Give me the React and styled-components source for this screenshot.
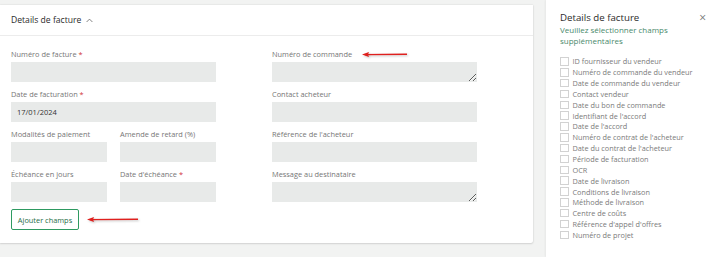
import React from 'react'
import styled, { createGlobalStyle } from 'styled-components'

const GlobalStyle = createGlobalStyle`
  html, body {
    margin: 0;
    padding: 0;
    background: #f2f3f2;
    font-family: "Open Sans", "Noto Sans", sans-serif;
  }
`

const leftFields = [
  [{ label: 'Numéro de facture', required: true }],
  [{ label: 'Date de facturation', required: true, value: '17/01/2024' }],
  [{ label: 'Modalités de paiement' }, { label: 'Amende de retard (%)' }],
  [{ label: 'Échéance en jours' }, { label: "Date d'échéance", required: true }],
]

const rightFields = [
  { label: 'Numéro de commande', area: true },
  { label: 'Contact acheteur' },
  { label: "Référence de l'acheteur" },
  { label: 'Message au destinataire', area: true },
]

const options = [
  'ID fournisseur du vendeur',
  'Numéro de commande du vendeur',
  'Date de commande du vendeur',
  'Contact vendeur',
  'Date du bon de commande',
  "Identifiant de l'accord",
  "Date de l'accord",
  "Numéro de contrat de l'acheteur",
  "Date du contrat de l'acheteur",
  'Période de facturation',
  'OCR',
  'Date de livraison',
  'Conditions de livraison',
  'Méthode de livraison',
  'Centre de coûts',
  "Référence d'appel d'offres",
  'Numéro de projet',
]

// red annotation arrow, tip on the left
const Arrow = ({ x, y, length }) => (
  <ArrowSvg style={{ left: x, top: y - 5 }} width={length + 4} height="10" viewBox={`0 0 ${length + 4} 10`}>
    <line x1="4" y1="5.6" x2={length} y2="5.2" stroke="#e0201e" strokeWidth="1.4" />
    <path d="M1 5.5 L8 3 L7 5.5 L8 8 Z" fill="#e0201e" />
  </ArrowSvg>
)

const Field = ({ label, required, value, area, width }) => (
  <FieldBox $width={width}>
    <Label>
      {label}
      {required && <Star> *</Star>}
    </Label>
    {area ? <Area readOnly /> : <Input readOnly defaultValue={value || ''} />}
  </FieldBox>
)

const App = () => {
  return (
    <>
      <GlobalStyle />
      <Page>
        <Main>
          <Card>
            <CardHeader>
              Details de facture
              <Chevron width="7" height="5" viewBox="0 0 7 5">
                <path d="M0.6 4 L3.5 1.1 L6.4 4" fill="none" stroke="#666" strokeWidth="0.8" />
              </Chevron>
            </CardHeader>
            <CardBody>
              <Columns>
                <Column>
                  {leftFields.map((row, i) => (
                    <Row key={i}>
                      {row.map((f) => (
                        <Field key={f.label} {...f} width={row.length > 1 ? 96 : 205} />
                      ))}
                    </Row>
                  ))}
                </Column>
                <Column>
                  {rightFields.map((f) => (
                    <Row key={f.label}>
                      <Field {...f} width={205} />
                    </Row>
                  ))}
                </Column>
              </Columns>
              <AddButton>Ajouter champs</AddButton>
            </CardBody>
            <Arrow x={361} y={49} length={46} />
            <Arrow x={86} y={214} length={52} />
          </Card>
        </Main>
        <Panel>
          <PanelHead>
            <div>
              <PanelTitle>Details de facture</PanelTitle>
              <PanelSub>Veuillez sélectionner champs supplémentaires</PanelSub>
            </div>
            <Close>×</Close>
          </PanelHead>
          <OptionList>
            {options.map((o) => (
              <Option key={o}>
                <Box />
                {o}
              </Option>
            ))}
          </OptionList>
        </Panel>
      </Page>
    </>
  )
}

export default App

const Page = styled.div`
  display: flex;
  width: 726px;
  height: 257px;
  overflow: hidden;
`
const Main = styled.div`
  width: 533px;
  padding-top: 5px;
  margin-right: 13px;
`
const Card = styled.div`
  position: relative;
  background: #fff;
  box-shadow: 0 0 2px rgba(0, 0, 0, 0.14), 0 1px 2px rgba(0, 0, 0, 0.1);
  border-radius: 0 0 2px 0;
`
const CardHeader = styled.div`
  height: 31px;
  display: flex;
  align-items: center;
  padding-left: 11px;
  font-size: 8.6px;
  color: #2b2b2b;
  border-bottom: 1px solid #ececec;
  box-sizing: border-box;
`
const Chevron = styled.svg`
  margin-left: 5px;
`
const CardBody = styled.div`
  padding: 12px 11px 13px;
`
const Columns = styled.div`
  display: flex;
  gap: 56px;
`
const Column = styled.div`
  display: flex;
  flex-direction: column;
  gap: 6px;
  width: 205px;
`
const Row = styled.div`
  display: flex;
  justify-content: space-between;
`
const FieldBox = styled.div`
  width: ${(p) => p.$width}px;
  display: flex;
  flex-direction: column;
  gap: 2px;
`
const Label = styled.div`
  height: 12px;
  line-height: 12px;
  font-size: 7.4px;
  color: #767676;
  white-space: nowrap;
`
const Star = styled.span`
  color: #d13438;
`
const Input = styled.input`
  box-sizing: border-box;
  height: 20px;
  width: 100%;
  border: none;
  outline: none;
  background: #e8eae9;
  padding: 0 6px;
  font-family: inherit;
  font-size: 7.5px;
  color: #333;
`
const Area = styled.textarea`
  box-sizing: border-box;
  display: block;
  height: 20px;
  width: 100%;
  margin: 0;
  border: none;
  outline: none;
  background: #e8eae9;
  resize: vertical;
`
const AddButton = styled.button`
  margin-top: 7px;
  width: 68px;
  height: 21px;
  border: 1.5px solid #2e9a61;
  border-radius: 2px;
  background: #fff;
  font-family: inherit;
  font-size: 7.4px;
  color: #1f6e48;
  padding: 0;
`
const ArrowSvg = styled.svg`
  position: absolute;
  filter: drop-shadow(1px 1px 1px rgba(0, 0, 0, 0.25));
`
const Panel = styled.div`
  flex: 1;
  background: #fff;
  padding: 11px 14px 0;
  box-shadow: -1px 0 2px rgba(0, 0, 0, 0.05);
`
const PanelHead = styled.div`
  display: flex;
  justify-content: space-between;
  align-items: flex-start;
`
const PanelTitle = styled.div`
  font-size: 9.7px;
  color: #2b2b2b;
  line-height: 13px;
`
const PanelSub = styled.div`
  font-size: 8px;
  line-height: 11px;
  color: #4a8a6c;
  width: 110px;
`
const Close = styled.div`
  font-size: 12px;
  color: #777;
  line-height: 12px;
  margin: 1px 6px 0 0;
`
const OptionList = styled.div`
  margin-top: 10px;
  display: flex;
  flex-direction: column;
`
const Option = styled.div`
  display: flex;
  align-items: center;
  height: 10.85px;
  font-size: 7.3px;
  color: #7a7a7a;
  white-space: nowrap;
`
const Box = styled.span`
  box-sizing: border-box;
  width: 8.5px;
  height: 8.5px;
  border: 1px solid #d2d2d2;
  margin-right: 4px;
  flex-shrink: 0;
`
